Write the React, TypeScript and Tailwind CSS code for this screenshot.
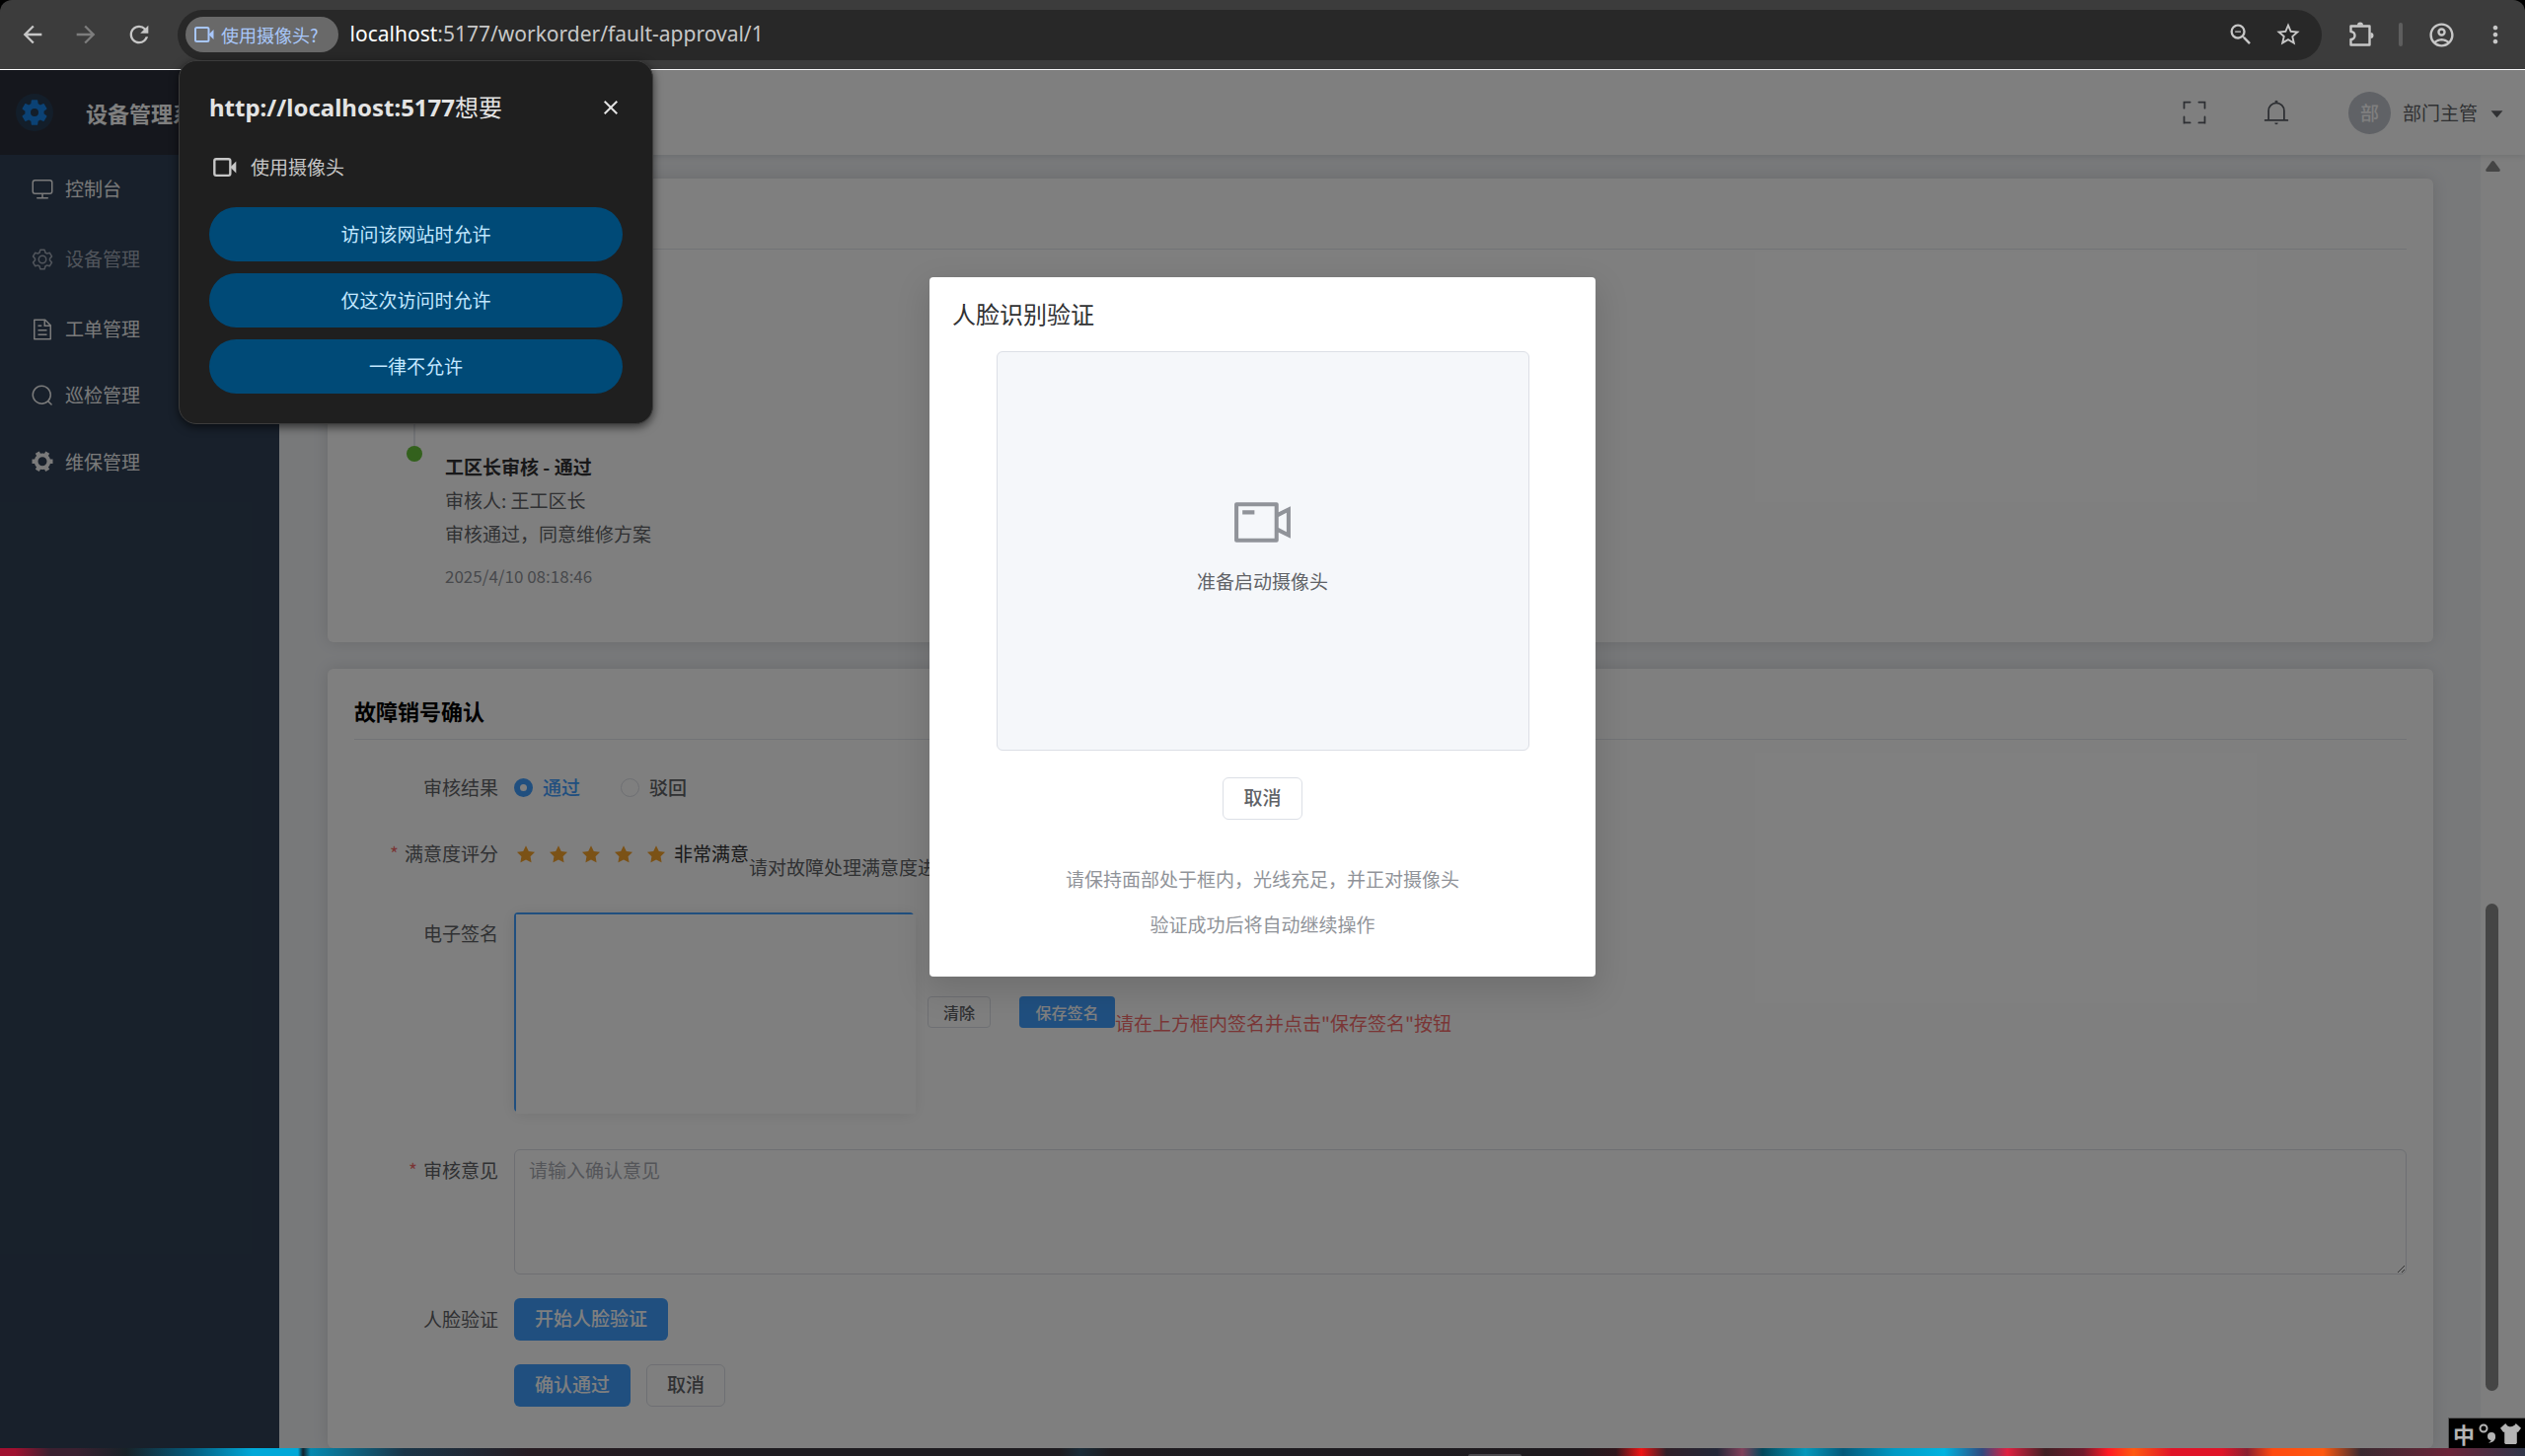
import type { ReactNode } from "react";
import {
  MdArrowBack,
  MdArrowForward,
  MdRefresh,
  MdZoomOut,
  MdStarBorder,
  MdMoreVert,
  MdClose,
  MdOutlineAccountCircle,
} from "react-icons/md";

const icons = {
  monitor:
    "M544 768v128h192a32 32 0 1 1 0 64H288a32 32 0 1 1 0-64h192V768H192A128 128 0 0 1 64 640V256a128 128 0 0 1 128-128h640a128 128 0 0 1 128 128v384a128 128 0 0 1-128 128H544zM192 192a64 64 0 0 0-64 64v384a64 64 0 0 0 64 64h640a64 64 0 0 0 64-64V256a64 64 0 0 0-64-64H192z",
  setting:
    "M600.704 64a32 32 0 0 1 30.464 22.208l35.2 109.376c14.784 7.232 28.928 15.36 42.432 24.512l112.384-24.192a32 32 0 0 1 34.432 15.36L944.32 364.8a32 32 0 0 1-4.032 37.504l-77.12 85.12a357.12 357.12 0 0 1 0 49.024l77.12 85.248a32 32 0 0 1 4.032 37.504l-88.704 153.6a32 32 0 0 1-34.432 15.296L708.8 803.904c-13.44 9.088-27.648 17.28-42.368 24.512l-35.264 109.376A32 32 0 0 1 600.704 960H423.296a32 32 0 0 1-30.464-22.208L357.696 828.48a351.616 351.616 0 0 1-42.56-24.64l-112.32 24.256a32 32 0 0 1-34.432-15.36L79.68 659.2a32 32 0 0 1 4.032-37.504l77.12-85.248a357.12 357.12 0 0 1 0-48.896l-77.12-85.248A32 32 0 0 1 79.68 364.8l88.704-153.6a32 32 0 0 1 34.432-15.296l112.32 24.256c13.568-9.152 27.776-17.408 42.56-24.64l35.2-109.312A32 32 0 0 1 423.232 64H600.64zm-23.424 64H446.72l-36.352 113.088-24.512 11.968a294.113 294.113 0 0 0-34.816 20.096l-22.656 15.36-116.224-25.088-65.28 113.152 79.68 88.192-1.92 27.136a293.12 293.12 0 0 0 0 40.192l1.92 27.136-79.808 88.192 65.344 113.152 116.224-25.024 22.656 15.296a294.113 294.113 0 0 0 34.816 20.096l24.512 11.968L446.72 896h130.688l36.48-113.152 24.448-11.904a288.282 288.282 0 0 0 34.752-20.096l22.592-15.296 116.288 25.024 65.28-113.152-79.744-88.192 1.92-27.136a293.12 293.12 0 0 0 0-40.256l-1.92-27.136 79.808-88.128-65.344-113.152-116.288 24.96-22.592-15.232a287.616 287.616 0 0 0-34.752-20.096l-24.448-11.904L577.344 128zM512 320a192 192 0 1 1 0 384 192 192 0 0 1 0-384zm0 64a128 128 0 1 0 0 256 128 128 0 0 0 0-256z",
  document:
    "M832 384H576V128H192v768h640V384zm-26.496-64L640 154.496V320h165.504zM160 64h480l256 256v608a32 32 0 0 1-32 32H160a32 32 0 0 1-32-32V96a32 32 0 0 1 32-32zm160 448h384v64H320v-64zm0-192h160v64H320v-64zm0 384h384v64H320v-64z",
  search:
    "m795.904 750.72 124.992 124.928a32 32 0 0 1-45.248 45.248L750.656 795.904a416 416 0 1 1 45.248-45.248zM480 832a352 352 0 1 0 0-704 352 352 0 0 0 0 704z",
  tools:
    "M764.416 254.72a351.68 351.68 0 0 1 86.336 149.184H960v192.064H850.752a351.68 351.68 0 0 1-86.336 149.312l54.72 94.72-166.272 96-54.592-94.72a352.64 352.64 0 0 1-172.48 0L371.136 936l-166.272-96 54.72-94.72a351.68 351.68 0 0 1-86.336-149.312H64v-192h109.248a351.68 351.68 0 0 1 86.336-149.312L204.8 160l166.208-96h.192l54.656 94.592a352.64 352.64 0 0 1 172.48 0L652.8 64h.128L819.2 160l-54.72 94.72zM704 499.968a192 192 0 1 0-384 0 192 192 0 0 0 384 0z",
  fullScreen:
    "m160 96.064 192 .192a32 32 0 0 1 0 64l-192-.192V352a32 32 0 0 1-64 0V96h64v.064zm0 831.872V928H96V672a32 32 0 1 1 64 0v191.936l192-.192a32 32 0 1 1 0 64l-192 .192zM864 96.064V96h64v256a32 32 0 1 1-64 0V160.064l-192 .192a32 32 0 1 1 0-64l192-.192zm0 831.872-192-.192a32 32 0 0 1 0-64l192 .192V672a32 32 0 1 1 64 0v256h-64v-.064z",
  bell: "M448 128a64 64 0 0 1 128 0zM256 768V448a256 256 0 1 1 512 0v320h64V448a320 320 0 0 0-640 0v320zM96 768h832q32 0 32 32t-32 32H96q-32 0-32-32t32-32zm352 128h128a64 64 0 0 1-128 0z",
  caretBottom: "m192 384 320 384 320-384z",
  star: "M283.84 867.84 512 747.776l228.16 119.936a6.4 6.4 0 0 0 9.28-6.72l-43.52-254.08 184.512-179.904a6.4 6.4 0 0 0-3.52-10.88l-255.104-37.12L517.76 147.904a6.4 6.4 0 0 0-11.52 0L392.192 379.072l-255.104 37.12a6.4 6.4 0 0 0-3.52 10.88L318.08 606.976l-43.584 254.08a6.4 6.4 0 0 0 9.28 6.72z",
  videoCamera:
    "M704 768V256H128v512h576zm64-416 192-96v512l-192-96v128a32 32 0 0 1-32 32H96a32 32 0 0 1-32-32V224a32 32 0 0 1 32-32h640a32 32 0 0 1 32 32v128zm0 71.552v176.896l128 64V359.552l-128 64zM192 320h192v64H192v-64z",
};

function Icon({ name, className }: { name: keyof typeof icons; className: string }) {
  return (
    <svg viewBox="0 0 1024 1024" fill="currentColor" className={className} aria-hidden="true">
      <path fillRule="evenodd" d={icons[name]} />
    </svg>
  );
}

function CameraIcon({ className }: { className: string }) {
  return (
    <svg viewBox="0 0 20 16" fill="none" className={className} aria-hidden="true">
      <rect x="1" y="1" width="13.500" height="14" rx="1.500" stroke="currentColor" strokeWidth="2" />
      <path d="M14.500 8 19.500 3v10z" fill="currentColor" />
    </svg>
  );
}

const menu: { name: string; icon: keyof typeof icons; className: string }[] = [
  { name: "控制台", icon: "monitor", className: "h-[68px] text-[#f4f4f5]" },
  { name: "设备管理", icon: "setting", className: "h-[75px] text-[#a3abb8]" },
  { name: "工单管理", icon: "document", className: "h-[67px] text-[#f4f4f5]" },
  { name: "巡检管理", icon: "search", className: "h-[67px] text-[#f4f4f5]" },
  { name: "维保管理", icon: "tools", className: "h-[68px] text-[#f4f4f5]" },
];

function BrowserBar() {
  return (
    <div className="bg-black">
      <div className="flex h-[70px] items-center rounded-t-xl bg-[#3c3c3c] pr-2 text-[#c7c7c7]">
        <div className="flex w-[180px] items-center gap-[26px] pl-[19px]">
          <button aria-label="后退">
            <MdArrowBack className="size-7" />
          </button>
          <button aria-label="前进" className="text-[#7d7d7d]">
            <MdArrowForward className="size-7" />
          </button>
          <button aria-label="刷新">
            <MdRefresh className="size-7" />
          </button>
        </div>
        <div className="flex h-[51px] flex-1 items-center rounded-full bg-[#282828] pr-5 pl-2">
          <button className="flex h-9 items-center gap-[7px] rounded-full bg-[#696969] pr-5 pl-[9px] text-lg text-[#a8c7fa]">
            <CameraIcon className="h-4 w-5" />
            使用摄像头?
          </button>
          <div className="ml-3 flex-1 font-['Noto_Sans','Noto_Sans_CJK_SC',sans-serif] text-[21px] text-[#c7c7c7]">
            <span className="text-white">localhost</span>:5177/workorder/fault-approval/1
          </div>
          <button aria-label="缩放" className="mr-5">
            <MdZoomOut className="size-7" />
          </button>
          <button aria-label="收藏">
            <MdStarBorder className="size-7" />
          </button>
        </div>
        <div className="flex w-[198px] items-center pl-[25px]">
          <button aria-label="扩展程序">
            <svg viewBox="0 0 28 28" className="size-7" fill="none" stroke="currentColor" strokeWidth="2.4" strokeLinejoin="round">
              <path d="M4.5 5.5h19v19h-19v-5.5a4 4 0 0 0 0-8z" />
              <path d="M11 4.5a3 3 0 0 1 6 0zM24.500 12a3 3 0 0 1 0 6z" fill="currentColor" strokeWidth="0" />
            </svg>
          </button>
          <span className="ml-[25px] h-6 w-1 rounded bg-[#5e5e5e]" />
          <button aria-label="个人资料" className="ml-[25px]">
            <MdOutlineAccountCircle className="size-[29px]" />
          </button>
          <button aria-label="更多" className="ml-[26px]">
            <MdMoreVert className="size-7" />
          </button>
        </div>
      </div>
    </div>
  );
}

function Sidebar() {
  return (
    <aside className="w-[283px] shrink-0 bg-[#304156]">
      <div className="flex h-[86px] items-center bg-[#2b2f3a] pl-4">
        <span className="flex size-[38px] items-center justify-center rounded-full bg-[#263c54] text-[#1684ea]">
          <svg viewBox="0 0 24 24" className="size-8" fill="currentColor" aria-hidden="true">
            <path d="M19.14 12.94c.04-.3.06-.61.06-.94 0-.32-.02-.64-.07-.94l2.03-1.580a.49.49 0 0 0 .12-.61l-1.920-3.320a.488.488 0 0 0-.59-.22l-2.390.96c-.5-.38-1.030-.7-1.620-.94l-.36-2.540a.484.484 0 0 0-.48-.41h-3.840c-.24 0-.43.17-.47.41l-.36 2.540c-.59.24-1.130.57-1.620.94l-2.390-.96c-.22-.08-.47 0-.59.22L2.740 8.870c-.12.21-.08.47.12.61l2.030 1.580c-.05.3-.09.63-.09.94s.02.64.07.94l-2.030 1.580a.49.49 0 0 0-.12.61l1.920 3.320c.12.22.37.29.59.22l2.390-.96c.5.38 1.030.7 1.620.94l.36 2.540c.05.24.24.41.48.41h3.840c.24 0 .44-.17.47-.41l.36-2.540c.59-.24 1.130-.56 1.620-.94l2.390.96c.22.08.47 0 .59-.22l1.920-3.320c.12-.22.07-.47-.12-.61l-2.010-1.580zM12 15a3 3 0 1 1 0-6 3 3 0 0 1 0 6z" />
          </svg>
        </span>
        <h1 className="ml-[33px] text-[22px] font-bold whitespace-nowrap text-white">设备管理系统</h1>
      </div>
      <nav className="flex flex-col">
        {menu.map((item) => (
          <a key={item.name} href="#" className={`flex items-center gap-[11px] pl-[31px] text-[19px] ${item.className}`}>
            <Icon name={item.icon} className="size-6" />
            {item.name}
          </a>
        ))}
      </nav>
    </aside>
  );
}

function Header() {
  return (
    <header className="relative z-10 flex h-[86px] items-center justify-end bg-white pr-[19px] text-[#5a5e66] shadow-[0_1px_6px_rgba(0,21,41,0.12)]">
      <button aria-label="全屏">
        <Icon name="fullScreen" className="size-7" />
      </button>
      <button aria-label="通知" className="ml-[55px]">
        <Icon name="bell" className="size-7" />
      </button>
      <button className="ml-[59px] flex items-center text-[19px] text-[#606266]">
        <span className="flex size-[43px] items-center justify-center rounded-full bg-[#c0c4cc] font-medium text-white">部</span>
        <span className="ml-3">部门主管</span>
        <Icon name="caretBottom" className="ml-[10px] size-[19px]" />
      </button>
    </header>
  );
}

function Card({ title, className, children }: { title?: string; className?: string; children: ReactNode }) {
  return (
    <section className={`rounded-md bg-white px-[27px] shadow-[0_0_16px_rgba(0,0,0,0.12)] ${className}`}>
      <div className="flex h-[72px] items-center border-b border-[#e4e7ed] pt-3">
        {title && <h2 className="h-8 text-[22px] leading-8 font-bold text-black">{title}</h2>}
      </div>
      {children}
    </section>
  );
}

function FormRow({ label, htmlFor, required, className, children }: { label?: string; htmlFor?: string; required?: boolean; className: string; children: ReactNode }) {
  return (
    <div className={`flex items-start ${className}`}>
      <label htmlFor={htmlFor} className="flex h-[43px] w-[162px] shrink-0 items-center justify-end pr-4 text-[19px] text-[#606266]">
        {required && <span className="mr-[6px] text-[#f56c6c]">*</span>}
        {label}
      </label>
      {children}
    </div>
  );
}

function ApprovalForm() {
  return (
    <form className="flex flex-col gap-6 pt-[27px] text-[19px]">
      <FormRow label="审核结果" className="min-h-[43px]">
        <div className="flex h-[43px] items-center gap-[41px] font-medium">
          <label className="flex items-center gap-[10px] text-[#409eff]">
            <input type="radio" name="result" defaultChecked className="size-[19px] appearance-none rounded-full border-[6px] border-[#409eff] bg-white" />
            通过
          </label>
          <label className="flex items-center gap-[10px] text-[#606266]">
            <input type="radio" name="result" className="size-[19px] appearance-none rounded-full border border-[#dcdfe6] bg-white" />
            驳回
          </label>
        </div>
      </FormRow>
      <FormRow label="满意度评分" required className="min-h-[57px]">
        <div className="flex h-[43px] items-center">
          <div className="flex gap-[9px] text-[#f7a42d]">
            {[1, 2, 3, 4, 5].map((n) => (
              <button key={n} type="button" aria-label={`${n}星`}>
                <Icon name="star" className="size-6" />
              </button>
            ))}
          </div>
          <span className="ml-[6px] text-[#303133]">非常满意</span>
        </div>
        <p className="mt-[23px] leading-6 text-[#606266]">请对故障处理满意度进行评分</p>
      </FormRow>
      <FormRow label="电子签名" className="min-h-[216px]">
        <div className="h-[202px] w-[405px] rounded border-2 border-[#409eff] shadow-[0_2px_16px_rgba(0,0,0,0.1)]">
          <canvas className="h-[202px] w-[405px] max-w-none bg-white" />
        </div>
        <button type="button" className="mt-[85px] ml-[14px] h-8 w-16 rounded border border-[#dcdfe6] text-base leading-7 font-medium text-[#606266]">
          清除
        </button>
        <button type="button" className="mt-[85px] ml-[29px] h-8 w-[97px] rounded bg-[#409eff] text-base leading-7 font-medium text-white">
          保存签名
        </button>
        <p className="mt-[100px] leading-6 text-[#f56c6c]">请在上方框内签名并点击"保存签名"按钮</p>
      </FormRow>
      <FormRow label="审核意见" htmlFor="comment" required className="min-h-[127px]">
        <textarea
          id="comment"
          placeholder="请输入确认意见"
          className="h-[127px] flex-1 resize-y rounded-md border border-[#dcdfe6] px-[14px] py-[6px] leading-7 placeholder:text-[#a8abb2]"
        />
      </FormRow>
      <FormRow label="人脸验证" className="min-h-[43px]">
        <button type="button" className="h-[43px] rounded-md bg-[#409eff] px-[21px] pb-[3px] font-medium text-white">
          开始人脸验证
        </button>
      </FormRow>
      <FormRow className="min-h-[43px]">
        <button type="button" className="h-[43px] rounded-md bg-[#409eff] px-[21px] pb-[3px] font-medium text-white">
          确认通过
        </button>
        <button type="button" className="ml-4 h-[43px] rounded-md border border-[#dcdfe6] px-5 pb-[3px] font-medium text-[#606266]">
          取消
        </button>
      </FormRow>
    </form>
  );
}

function FaceDialog() {
  return (
    <div className="absolute inset-0 z-20 flex items-start justify-center bg-black/50 pt-[210px]">
      <div role="dialog" aria-label="人脸识别验证" className="flex w-[675px] flex-col items-center rounded bg-white pb-10 text-[19px] shadow-[0_12px_32px_4px_rgba(0,0,0,0.12)]">
        <h2 className="w-full px-[23px] pt-[21px] text-2xl leading-8 text-[#303133]">人脸识别验证</h2>
        <div className="mt-[22px] flex h-[405px] w-[540px] flex-col items-center justify-center rounded-md border border-[#dcdfe6] bg-[#f5f7fa] pb-[17px]">
          <Icon name="videoCamera" className="size-[65px] text-[#909399]" />
          <p className="mt-[13px] leading-7 text-[#606266]">准备启动摄像头</p>
        </div>
        <button className="mt-[27px] h-[43px] rounded-md border border-[#dcdfe6] px-5 pb-[3px] font-medium text-[#606266]">取消</button>
        <p className="mt-[47px] leading-[26px] text-[#909399]">请保持面部处于框内，光线充足，并正对摄像头</p>
        <p className="mt-5 leading-[26px] text-[#909399]">验证成功后将自动继续操作</p>
      </div>
    </div>
  );
}

function PermissionPrompt() {
  return (
    <div className="absolute top-[61px] left-[181px] z-30 w-[481px] rounded-[18px] border border-[#3c3c3c] bg-[#1f1f1f] px-[30px] pt-[27px] pb-[30px] text-[#e3e3e3] shadow-[0_3px_10px_rgba(0,0,0,0.6)]">
      <div className="flex h-10 items-center justify-between">
        <h2 className="font-['Noto_Sans','Noto_Sans_CJK_SC',sans-serif] text-2xl font-bold">
          http://localhost:5177<span className="font-normal">想要</span>
        </h2>
        <button aria-label="关闭">
          <MdClose className="size-6" />
        </button>
      </div>
      <div className="mt-[26px] flex h-7 items-center gap-[14px] pl-1 text-[19px] text-[#c7c7c7]">
        <CameraIcon className="h-[19px] w-6" />
        使用摄像头
      </div>
      <div className="mt-[27px] flex flex-col gap-3 text-[19px] text-[#c2e7ff]">
        <button className="h-[55px] rounded-full bg-[#004a77]">访问该网站时允许</button>
        <button className="h-[55px] rounded-full bg-[#004a77]">仅这次访问时允许</button>
        <button className="h-[55px] rounded-full bg-[#004a77]">一律不允许</button>
      </div>
    </div>
  );
}

function InputMethodBar() {
  return (
    <div className="absolute right-0 bottom-2 z-30 flex h-[31px] items-center gap-1 border-t border-l border-[#555] bg-black px-1 text-[#b4b4b4]">
      <span className="text-[22px] leading-[22px] font-bold">中</span>
      <svg viewBox="0 0 18 20" className="h-5 w-[18px]" aria-hidden="true">
        <circle cx="5" cy="5" r="3.500" fill="none" stroke="currentColor" strokeWidth="2" />
        <circle cx="13" cy="13" r="4" fill="currentColor" />
        <path d="M17 13c0 4-2 6-7 7 2-1.500 3-3 3-5z" fill="currentColor" />
      </svg>
      <svg viewBox="0 0 20 20" className="size-[21px]" fill="currentColor" aria-hidden="true">
        <path d="M5 0c2 4 8 4 10 0l5 4.500-3 4-1-.5v11l-1 1H5l-1-1V8l-1 .5-3-4z" />
      </svg>
    </div>
  );
}

export default function App() {
  return (
    <div className="relative flex h-screen flex-col overflow-hidden font-['Noto_Sans_CJK_SC',sans-serif]">
      <BrowserBar />
      <div className="relative flex min-h-0 flex-1 border-t border-white">
        <Sidebar />
        <div className="flex min-w-0 flex-1 flex-col">
          <Header />
          <div className="flex min-h-0 flex-1">
            <main className="flex min-w-0 flex-1 flex-col gap-[27px] overflow-hidden bg-[#f0f2f5] pt-6 pr-12 pl-[49px]">
              <Card className="h-[470px] shrink-0">
                <div className="flex pl-[53px]">
                  <div className="flex w-4 flex-col items-center">
                    <span className="h-[199px] w-[2px] bg-[#e4e7ed]" />
                    <span className="size-4 rounded-full bg-[#67c23a]" />
                  </div>
                  <div className="mt-[203px] ml-[23px] text-[19px] leading-[34px] text-[#606266]">
                    <h3 className="font-bold text-[#303133]">工区长审核 - 通过</h3>
                    <p>审核人: 王工区长</p>
                    <p>审核通过，同意维修方案</p>
                    <time className="mt-[14px] block text-[17px] leading-6 text-[#909399]">2025/4/10 08:18:46</time>
                  </div>
                </div>
              </Card>
              <Card title="故障销号确认" className="flex-1">
                <ApprovalForm />
              </Card>
            </main>
            <div className="flex w-[45px] flex-col items-start justify-between bg-[#fcfcfc] pt-[6px] pb-[58px] pl-[5px]">
              <svg viewBox="0 0 15 11" className="h-[11px] w-[15px]" fill="#8b8b8b" aria-hidden="true">
                <path d="M6 1q1.500-2 3 0l5.500 7.500q1 2.500-1.500 2.500H2Q-.5 11 .5 8.500z" />
              </svg>
              <div className="h-[494px] w-[13px] rounded-full bg-[#8b8b8b]" />
            </div>
          </div>
        </div>
        <FaceDialog />
      </div>
      <div className="flex h-2 items-end justify-center bg-[linear-gradient(90deg,#a01030_0%,#a01030_0.6%,#3a2030_2%,#3a2030_3%,#182228_5%,#04597a_7.500%,#00a8d8_10%,#00a8d8_11.800%,#10202a_12%,#0489b0_12.300%,#1a3548_16%,#261c22_21%,#1e1c20_30%,#1e1c20_42%,#1a2c38_42.800%,#1e1c20_44%,#1e1a1e_62.500%,#30161c_64%,#f01414_65%,#302028_66%,#242838_68%,#80405a_69%,#04465a_69.800%,#0599bc_71.500%,#04597a_73%,#0099c4_75%,#00b4e0_77%,#304a80_78.500%,#e02040_79.500%,#402024_81%,#701a2c_82.500%,#ff1a24_83.500%,#ff5a10_84.500%,#e01428_86%,#e01428_88%,#8a2030_89%,#ff4a10_90%,#ff5a10_92%,#3a2a30_93.500%,#6a2438_97%,#30364a_100%)]">
        <span className="ml-[470px] h-[2px] w-[54px] rounded-t bg-[#4a484c]" />
      </div>
      <InputMethodBar />
      <PermissionPrompt />
    </div>
  );
}
